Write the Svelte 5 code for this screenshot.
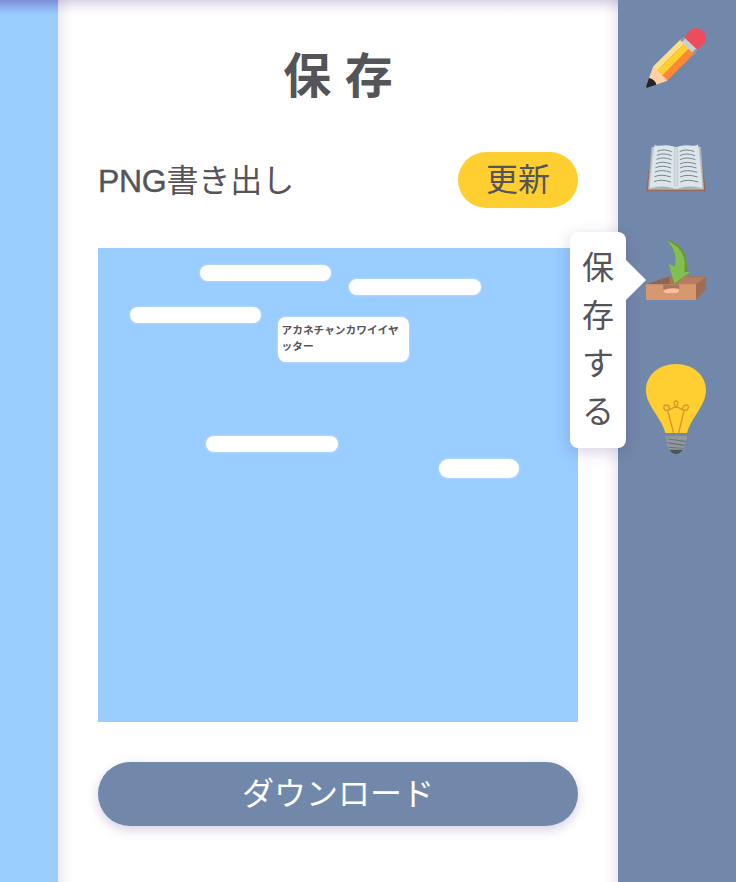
<script>
  const notes = [
    { x: 101.5, y: 16.5, w: 131.5, h: 16 },
    { x: 251, y: 31, w: 132, h: 16 },
    { x: 31.5, y: 59, w: 131.5, h: 16 },
    { x: 179.5, y: 68.5, w: 131.5, h: 45, text: 'アカネチャンカワイイヤッター' },
    { x: 108, y: 188, w: 132, h: 16 },
    { x: 341, y: 210.5, w: 80, h: 19.5 }
  ];
  const lineRows = [63, 75, 87, 100, 112, 125, 139, 154];
</script>

<div class="app">
  <main class="content">
    <div class="board"></div>
    <section class="panel">
      <h1>保 存</h1>
      <div class="row">
        <span class="label"><span class="latin">PNG</span>書き出し</span>
        <button class="update">更新</button>
      </div>
      <div class="preview">
        {#each notes as n}
          <div class="note" class:filled={n.text} style="left:{n.x}px;top:{n.y}px;width:{n.w}px;height:{n.h}px">{n.text ?? ''}</div>
        {/each}
      </div>
      <button class="download">ダウンロード</button>
    </section>
  </main>

  <nav class="rail">
    <svg class="pencil" viewBox="48 39 180 180">
      <path fill="#ed4c5c" d="M162 68 178 49Q193 32 214 44Q236 59 223 84L201 106Z" />
      <path fill="#c5d0d8" d="M149 76 162 67 202 104 190 119Z" />
      <path fill="#94989b" d="M149 76 162 66 166 70 155 82ZM184 114 198 101 202 105 190 119Z" />
      <path fill="#ffdf85" d="M70 154 150 75 162 87 81 167Z" />
      <path fill="#ffce31" d="M81 167 162 87 176 102 97 182Z" />
      <path fill="#ff8736" d="M97 182 176 102 191 117 111 197Z" />
      <path fill="#ffd0a6" d="M70 153Q76 158 83 168Q91 173 98 182Q107 188 112 197L78 209Q73 197 57 189Z" />
      <path fill="#232528" d="M57 189 48 216Q50 220 55 217L79 209Q76 194 57 189Z" />
    </svg>

    <svg class="book" viewBox="48 42 180 144">
      <path fill="#9b6958" d="M65 53H211L228 184H48Z" />
      <path fill="#a9b2b7" d="M64 51H213L222 179H54Z" />
      <path fill="#c5d0d5" d="M68 51 57 177Q99 164 134 177L143 177Q178 164 219 177L208 50Z" />
      <path fill="#dce5ea" d="M74 43Q75 49 88 47Q125 43 138 54Q151 43 188 47Q203 48 204 42L217 173Q174 161 138 176Q102 161 60 173Z" />
      <path fill="#c6d0d6" d="M132 50 138 55 144 50 145 167 138 175 131 167Z" />
      <path stroke="#edf2f4" stroke-width="2" d="M138 55V175" />
      <g fill="none" stroke="#79848a" stroke-width="3">
        {#each lineRows as y, i}
          <path d="M{82 - i * 1.4} {y + 1}q20 -9 {43 + i * 1} 1" />
          <path d="M{149 + i * 0.3} {y + 2}q20 -10 {44 + i * 1.4} 0" />
        {/each}
      </g>
    </svg>

    <svg class="tray" viewBox="48 30 180 180">
      <path fill="#8f6652" d="M48 163 119 139V166Z" />
      <path fill="#a9765b" d="M119 139H228L197 166H119Z" />
      <path fill="#b87d60" d="M132 142H228L197 164H132Z" />
      <path fill="#a06c54" d="M228 141V178L197 210V163Z" />
      <path fill="#ffbd9b" d="M99 163H148V191H99Z" />
      <path fill="#a9765b" d="M99 163H148V177Q122 171 99 181Z" />
      <path fill="#d7976f" d="M48 163H100V182Q104 190 114 190H134Q147 189 148 179V163H198V210H48Z" />
      <path fill="#699635" d="M109 30Q148 36 164 72Q173 94 170 122L184 123 138 161 130 157 120 103 135 108Q141 58 109 30Z" />
      <path fill="#83bf4f" d="M110 32Q154 47 163 88Q166 108 163 127L182 125 133 161 116 102 134 109Q144 62 110 32Z" />
    </svg>

    <svg class="bulb" viewBox="48 27 180 270">
      <path fill="#ffce31" d="M138 27C87 27 48 61 48 105C48 133 63 155 79 179C92 200 102 216 106 234H171C175 216 185 199 198 179C213 155 228 133 228 105C228 61 189 27 138 27Z" />
      <path fill="none" stroke="#d09a2b" stroke-width="4" d="M131 234 113 166C121 163 119 151 108 150C98 150 100 167 111 166C124 164 132 154 137 157C143 153 147 138 138 138C129 138 132 153 139 157C146 154 152 165 165 166C177 166 178 150 169 150C158 150 155 164 162 167L146 234" />
      <path fill="#62727a" d="M113 244H166L159 284H119Z" />
      <path fill="#94989b" d="M106 243H171V252L166 257L106 250ZM108 252 166 261V269L110 261ZM109 265 163 273V279L113 275ZM113 278 160 281V285H119Z" />
      <path fill="#4d5357" d="M119 284H158Q151 296 138 297Q126 296 119 284Z" />
    </svg>
    <div class="tooltip"><span>保</span><span>存</span><span>す</span><span>る</span></div>
  </nav>
</div>

<style>
  :global(body) { margin: 0; }
  .app {
    display: flex;
    width: 736px;
    height: 882px;
    overflow: hidden;
    color: #555459;
    font-family: "Liberation Sans", "Noto Sans CJK JP", sans-serif;
  }
  .content { position: relative; display: flex; width: 618px; }
  .content::after {
    content: "";
    position: absolute;
    inset: 0 0 auto;
    height: 16px;
    background: linear-gradient(rgba(60, 20, 120, .18), rgba(60, 20, 120, .09) 35%, rgba(60, 20, 120, .02) 75%, transparent);
    pointer-events: none;
  }
  .board { width: 58px; background: linear-gradient(#8ba9ec, #99ccff 14px); }
  .panel {
    position: relative;
    display: flex;
    flex-direction: column;
    box-sizing: border-box;
    width: 560px;
    padding: 41px 40px 0;
    background: #fff;
    overflow: hidden;
  }
  .panel::before {
    content: "";
    position: absolute;
    inset: -30px 0;
    box-shadow: inset 0 0 16px rgba(60, 20, 120, .18);
    pointer-events: none;
  }
  h1 { margin: 0; height: 72px; font-size: 48px; line-height: 72px; text-align: center; }
  .row { display: flex; justify-content: space-between; height: 56px; margin-top: 39px; }
  .label { font-size: 32px; line-height: 58px; letter-spacing: -.1px; white-space: nowrap; }
  .latin { letter-spacing: -.3px; -webkit-text-stroke: .4px currentColor; }
  button { border: 0; padding: 0; font: inherit; color: inherit; font-size: 32px; }
  .update { width: 120px; height: 56px; padding-top: 1px; line-height: 55px; border-radius: 28px; background: #ffce31; }
  .preview { position: relative; flex: none; height: 474px; margin-top: 40px; background: #9cf; }
  .note {
    position: absolute;
    box-sizing: border-box;
    border-radius: 10px;
    background: #fff;
    box-shadow: 0 0 3px rgba(255, 255, 255, .55);
    font-size: 10.7px;
    font-weight: bold;
    line-height: 16px;
    line-break: anywhere;
  }
  .filled { padding: 5px 4px; border-radius: 8px; }
  .download {
    position: relative;
    flex: none;
    height: 64px;
    margin-top: 40px;
    line-height: 64px;
    border-radius: 32px;
    background: #7288aa;
    color: #fff;
    box-shadow: 0 4px 12px rgba(60, 20, 120, .2);
  }
  .rail {
    position: relative;
    display: flex;
    flex-direction: column;
    box-sizing: border-box;
    width: 118px;
    padding: 28px 0 0 28px;
    background: #7288aa;
  }
  svg { display: block; flex: none; width: 60px; }
  .pencil { height: 60px; }
  .book { height: 48px; margin-top: 56px; }
  .tray { height: 60px; margin-top: 48px; }
  .bulb { height: 90px; margin-top: 64px; }
  .tooltip {
    position: absolute;
    left: -48px;
    top: 232px;
    display: flex;
    flex-direction: column;
    align-items: center;
    box-sizing: border-box;
    width: 56px;
    height: 216px;
    padding-top: 12px;
    border-radius: 8px;
    background: #fff;
    box-shadow: 0 4px 16px rgba(60, 20, 120, .2);
    font-size: 32px;
    line-height: 48px;
  }
  .tooltip::after {
    content: "";
    position: absolute;
    left: 56px;
    top: 28px;
    border: 20px solid transparent;
    border-left-color: #fff;
    border-right: 0;
  }
</style>
